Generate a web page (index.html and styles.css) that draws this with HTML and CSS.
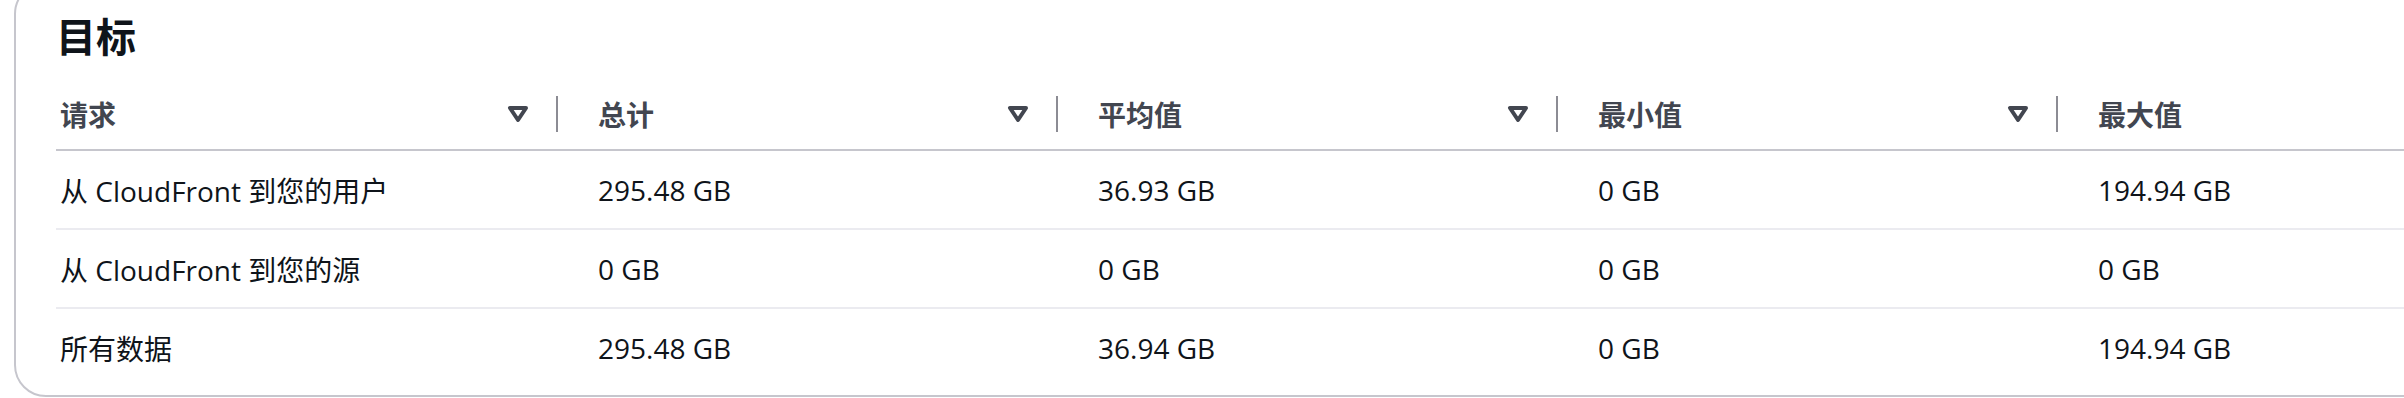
FILE: index.html
```html
<!DOCTYPE html>
<html lang="zh-CN">
<head>
<meta charset="utf-8">
<title>目标</title>
<link rel="stylesheet" href="styles.css">
</head>
<body>
<section class="card">
  <h2 class="title">目标</h2>
  <div class="table">
    <div class="row head">
      <div class="cell first"><span class="label">请求</span><svg class="sort" viewBox="0 0 16 16"><path d="M4 5h8l-4 6-4-6z"/></svg><span class="divider"></span></div>
      <div class="cell"><span class="label">总计</span><svg class="sort" viewBox="0 0 16 16"><path d="M4 5h8l-4 6-4-6z"/></svg><span class="divider"></span></div>
      <div class="cell"><span class="label">平均值</span><svg class="sort" viewBox="0 0 16 16"><path d="M4 5h8l-4 6-4-6z"/></svg><span class="divider"></span></div>
      <div class="cell"><span class="label">最小值</span><svg class="sort" viewBox="0 0 16 16"><path d="M4 5h8l-4 6-4-6z"/></svg><span class="divider"></span></div>
      <div class="cell last"><span class="label">最大值</span></div>
    </div>
    <div class="row body">
      <div class="cell first">从 CloudFront 到您的用户</div>
      <div class="cell">295.48 GB</div>
      <div class="cell">36.93 GB</div>
      <div class="cell">0 GB</div>
      <div class="cell last">194.94 GB</div>
    </div>
    <div class="row body">
      <div class="cell first">从 CloudFront 到您的源</div>
      <div class="cell">0 GB</div>
      <div class="cell">0 GB</div>
      <div class="cell">0 GB</div>
      <div class="cell last">0 GB</div>
    </div>
    <div class="row body">
      <div class="cell first">所有数据</div>
      <div class="cell">295.48 GB</div>
      <div class="cell">36.94 GB</div>
      <div class="cell">0 GB</div>
      <div class="cell last">194.94 GB</div>
    </div>
  </div>
</section>
</body>
</html>
```
FILE: styles.css
```css
html, body {
  margin: 0;
  padding: 0;
  background: #ffffff;
  overflow: hidden;
}

body {
  font-family: "Open Sans", "Noto Sans CJK SC", sans-serif;
  color: #0f141a;
  width: 2404px;
  height: 398px;
}

.card {
  box-sizing: border-box;
  margin: -18px 0 0 14px;
  width: 2700px;
  border: 2px solid #c6c6cd;
  border-radius: 32px;
  padding: 29px 0 9px 40px;
  background: #ffffff;
}

.title {
  margin: 0 0 18px 0;
  font-size: 40px;
  line-height: 48px;
  font-weight: 700;
  color: #0f141a;
}

.table {
  display: flex;
  flex-direction: column;
}

.row {
  display: flex;
  align-items: center;
}

.row.head {
  height: 70px;
  border-bottom: 2px solid #c6c6cd;
  color: #424650;
  font-weight: 700;
  font-size: 28px;
}

.row.body {
  height: 77px;
  border-bottom: 2px solid #ebebf0;
  font-size: 28px;
}

.row.body:last-child {
  border-bottom: none;
}

.cell {
  box-sizing: border-box;
  width: 500px;
  flex: none;
  padding-left: 40px;
  display: flex;
  align-items: center;
  white-space: nowrap;
}

.cell.first {
  width: 502px;
  padding-left: 4px;
}

.cell.last {
  width: 700px;
}

.label {
  flex: 1;
}

.sort {
  width: 32px;
  height: 32px;
  flex: none;
  margin-right: 22px;
}

.sort path {
  fill: none;
  stroke: #424650;
  stroke-width: 2;
  stroke-linejoin: round;
}

.divider {
  width: 2px;
  height: 36px;
  background: #8c8c94;
  flex: none;
}
```
